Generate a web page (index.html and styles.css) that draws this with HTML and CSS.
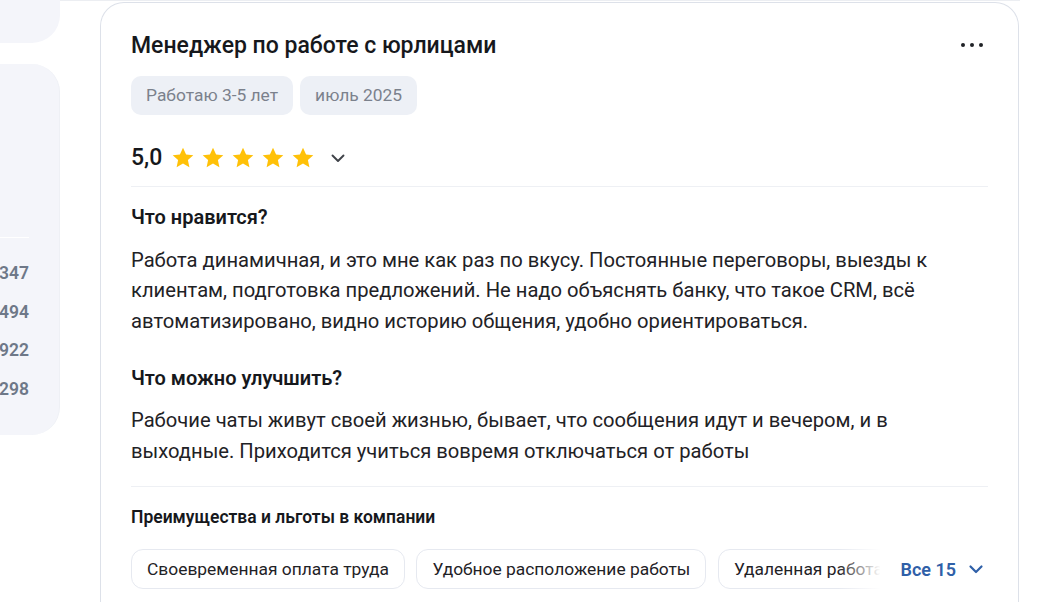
FILE: index.html
```html
<!DOCTYPE HTML>
<html lang="ru">

<head>
  <meta charset="utf-8" />
  <meta name="viewport" content="width=device-width,initial-scale=1.0" />
  <title>Отзыв сотрудника</title>
  <link rel="stylesheet" href="styles.css">
</head>

<body>
  <div id="page">
    <aside id="sidebar">
      <div class="side-card side-top"></div>
      <div class="side-card side-stats">
        <div class="side-line"></div>
        <ul class="side-list">
          <li>347</li>
          <li>494</li>
          <li>922</li>
          <li>298</li>
        </ul>
      </div>
    </aside>

    <main id="review">
      <div class="review-head">
        <h1 class="review-title">Менеджер по работе с юрлицами</h1>
        <span class="more-dots"><i></i><i></i><i></i></span>
      </div>
      <div class="tags">
        <span class="tag">Работаю 3-5 лет</span>
        <span class="tag">июль 2025</span>
      </div>
      <div class="rating">
        <span class="rating-value">5,0</span>
        <span class="stars">
          <svg viewBox="0 0 24 24"><path d="M12 1.8l3.1 6.6 7.2.8-5.4 4.9 1.5 7.1L12 17.6l-6.4 3.6 1.5-7.1L1.7 9.2l7.2-.8z" /></svg>
          <svg viewBox="0 0 24 24"><path d="M12 1.8l3.1 6.6 7.2.8-5.4 4.9 1.5 7.1L12 17.6l-6.4 3.6 1.5-7.1L1.7 9.2l7.2-.8z" /></svg>
          <svg viewBox="0 0 24 24"><path d="M12 1.8l3.1 6.6 7.2.8-5.4 4.9 1.5 7.1L12 17.6l-6.4 3.6 1.5-7.1L1.7 9.2l7.2-.8z" /></svg>
          <svg viewBox="0 0 24 24"><path d="M12 1.8l3.1 6.6 7.2.8-5.4 4.9 1.5 7.1L12 17.6l-6.4 3.6 1.5-7.1L1.7 9.2l7.2-.8z" /></svg>
          <svg viewBox="0 0 24 24"><path d="M12 1.8l3.1 6.6 7.2.8-5.4 4.9 1.5 7.1L12 17.6l-6.4 3.6 1.5-7.1L1.7 9.2l7.2-.8z" /></svg>
        </span>
        <svg class="rating-toggle" viewBox="0 0 16 16"><path d="M2.5 5.5l5.5 5.5 5.5-5.5" /></svg>
      </div>

      <section class="block">
        <h2 class="block-title">Что нравится?</h2>
        <p class="block-text">Работа динамичная, и это мне как раз по вкусу. Постоянные переговоры, выезды к клиентам, подготовка предложений. Не надо объяснять банку, что такое CRM, всё автоматизировано, видно историю общения, удобно ориентироваться.</p>
      </section>
      <section class="block">
        <h2 class="block-title">Что можно улучшить?</h2>
        <p class="block-text">Рабочие чаты живут своей жизнью, бывает, что сообщения идут и вечером, и в выходные. Приходится учиться вовремя отключаться от работы</p>
      </section>

      <section class="benefits">
        <h3 class="benefits-title">Преимущества и льготы в компании</h3>
        <div class="benefits-row">
          <div class="benefits-list">
            <span class="benefit">Своевременная оплата труда</span>
            <span class="benefit">Удобное расположение работы</span>
            <span class="benefit">Удаленная работа</span>
          </div>
          <button class="benefits-all">Все 15
            <svg viewBox="0 0 16 16"><path d="M2.5 5.5l5.5 5.5 5.5-5.5" /></svg>
          </button>
        </div>
      </section>
    </main>
  </div>
</body>

</html>
```

FILE: styles.css
```css
body {
  margin: 0px;
  font-family: Roboto, "Noto Sans", Arial, sans-serif;
  color: #1f2226;
  background: #fff;
  overflow: hidden;
}

#page {
  display: flex;
  align-items: flex-start;
  gap: 40px;
  width: 1020px;
  border-top: 1px solid #eceef2;
  height: 601px;
}

/* left column, mostly off-screen */
#sidebar {
  width: 240px;
  margin-left: -180px;
  margin-top: -40px;
  display: flex;
  flex-direction: column;
  gap: 21px;
  flex-shrink: 0;
}

.side-card {
  background: #f4f5fa;
  border-radius: 28px;
}

.side-top {
  height: 82px;
}

.side-stats {
  height: 371px;
  padding-top: 173px;
  box-sizing: border-box;
  border-right: 1px solid #eef0f5;
}

.side-line {
  height: 1px;
  background: #fff;
  margin-right: 30px;
  margin-left: 20px;
}

.side-list {
  list-style: none;
  margin: 0;
  padding: 25px 30px 0 0;
  text-align: right;
}

.side-list li {
  font-size: 17.5px;
  font-weight: 600;
  color: #6e7888;
  line-height: 20px;
}

.side-list li+li {
  margin-top: 18.7px;
}

#review {
  width: 919px;
  box-sizing: border-box;
  border: 1px solid #dde1e9;
  border-bottom: none;
  border-radius: 24px 24px 0 0;
  padding: 27px 30px 0 30px;
  margin-top: 1px;
  height: 610px;
  flex-shrink: 0;
}

.review-head {
  display: flex;
  align-items: center;
  justify-content: space-between;
}

.review-title {
  margin: 0;
  font-size: 23px;
  font-weight: 500;
  line-height: 32px;
  color: #16181c;
}

.more-dots {
  display: flex;
  gap: 5px;
  margin-right: 5px;
  margin-bottom: 3px;
}

.more-dots i {
  width: 4px;
  height: 4px;
  border-radius: 50%;
  background: #1f2226;
}

.tags {
  display: flex;
  gap: 7px;
  margin-top: 14px;
}

.tag {
  background: #edf0f6;
  color: #7b818c;
  font-size: 17.4px;
  line-height: 39px;
  padding: 0 15px;
  border-radius: 10px;
}

.rating {
  display: flex;
  align-items: center;
  margin-top: 29px;
  height: 28px;
  padding-bottom: 14px;
  border-bottom: 1px solid #eef0f4;
}

.rating-value {
  font-size: 23px;
  font-weight: 500;
  line-height: 28px;
  color: #16181c;
}

.stars {
  display: flex;
  gap: 6px;
  margin-left: 9px;
}

.stars svg {
  width: 24px;
  height: 24px;
  fill: #ffc108;
}

.rating-toggle {
  width: 16px;
  height: 16px;
  margin-left: 15px;
  fill: none;
  stroke: #3f4349;
  stroke-width: 1.9;
  stroke-linecap: round;
  stroke-linejoin: round;
}

.block {
  margin-top: 17px;
}

.block+.block {
  margin-top: 28.5px;
}

.block-title {
  margin: 0;
  font-size: 20px;
  font-weight: 600;
  line-height: 26px;
  color: #16181c;
}

.block-text {
  margin: 14.5px 0 0 0;
  max-width: 820px;
  font-size: 20.2px;
  line-height: 30.5px;
  color: #1f2226;
}

.benefits {
  margin-top: 20px;
  border-top: 1px solid #eef0f4;
  padding-top: 19px;
}

.benefits-title {
  margin: 0;
  font-size: 17.5px;
  font-weight: 600;
  line-height: 22px;
  color: #16181c;
}

.benefits-row {
  display: flex;
  align-items: center;
  margin-top: 21px;
}

.benefits-list {
  display: flex;
  gap: 11.5px;
  flex: 1;
  overflow: hidden;
  position: relative;
  white-space: nowrap;
}

.benefits-list::after {
  content: "";
  position: absolute;
  right: 0;
  top: 0;
  bottom: 0;
  width: 50px;
  background: linear-gradient(to right, rgba(255, 255, 255, 0), #fff 85%);
}

.benefit {
  border: 1px solid #e6e9f0;
  border-radius: 12px;
  padding: 0 15px;
  line-height: 38px;
  font-size: 17.4px;
  color: #1f2226;
}

.benefits-all {
  display: flex;
  align-items: center;
  gap: 12px;
  border: none;
  background: none;
  padding: 0 4px 0 12px;
  font-family: inherit;
  font-size: 18px;
  font-weight: 600;
  color: #2f60a8;
}

.benefits-all svg {
  width: 16px;
  height: 16px;
  fill: none;
  stroke: #2f60a8;
  stroke-width: 2.2;
  stroke-linecap: round;
  stroke-linejoin: round;
}
```
